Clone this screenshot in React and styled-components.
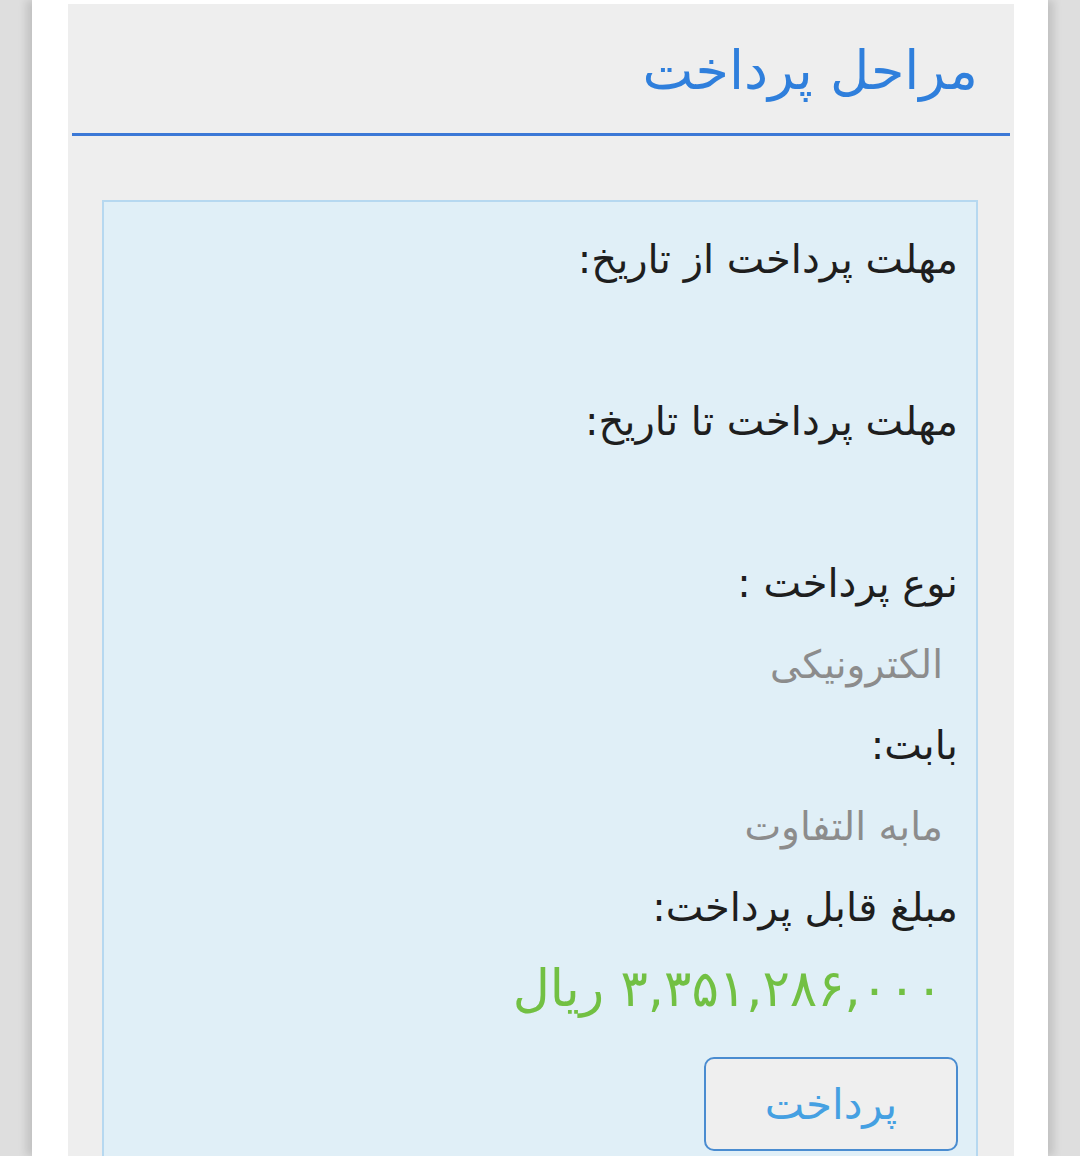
import React from "react";
import styled, { createGlobalStyle } from "styled-components";

const GlobalStyle = createGlobalStyle`
  html, body {
    margin: 0;
    padding: 0;
    background: #dedede;
    font-family: "DejaVu Sans", "Noto Sans", sans-serif;
  }
`;

const Page = styled.div`
  height: 1156px;
  overflow: hidden;
  display: flex;
  justify-content: center;
  background: #dedede;
`;

const Column = styled.div`
  width: 1016px;
  background: #ffffff;
  box-shadow: -6px 0 8px rgba(0, 0, 0, 0.12), 6px 0 8px rgba(0, 0, 0, 0.12);
  padding: 4px 34px 0 36px;
  box-sizing: border-box;
`;

const Panel = styled.div`
  direction: rtl;
  background: #eeeeee;
  height: 100%;
  display: flex;
  flex-direction: column;
`;

const Header = styled.div`
  height: 129px;
  margin: 0 4px 0 4px;
  border-bottom: 3px solid #3b78d6;
  display: flex;
  align-items: center;
  padding-right: 32px;
`;

const Title = styled.h2`
  margin: 4px 0 0 0;
  font-weight: normal;
  font-size: 54px;
  color: #2f7fdc;
`;

const Body = styled.div`
  padding: 64px 36px 0 34px;
  flex: 1;
  display: flex;
`;

const InfoBox = styled.div`
  flex: 1;
  background: #e0eff7;
  border: 2px solid #b6d8f0;
  border-bottom: none;
  padding: 17px 18px 0 18px;
`;

const Line = styled.div`
  height: 81px;
  line-height: 81px;
  font-size: ${(p) => (p.muted ? "39px" : "40px")};
  white-space: nowrap;
  color: ${(p) => (p.muted ? "#8c8c8c" : "#1e1e1e")};
  padding-right: ${(p) => (p.muted ? "15px" : "0")};
`;

const Amount = styled.div`
  height: 81px;
  line-height: 81px;
  font-size: 51px;
  color: #72c043;
  padding-right: 15px;
  white-space: nowrap;
`;

const PayButton = styled.button`
  margin-top: 28px;
  width: 254px;
  height: 94px;
  border: 2.5px solid #4a8cd0;
  border-radius: 10px;
  background: #efefef;
  color: #45a0e2;
  font-family: inherit;
  font-size: 42px;
  cursor: pointer;
`;

const fields = [
  { label: "مهلت پرداخت از تاریخ:", value: "" },
  { label: "مهلت پرداخت تا تاریخ:", value: "" },
  { label: "نوع پرداخت :", value: "الکترونیکی" },
  { label: "بابت:", value: "مابه التفاوت" },
];

export default function App() {
  return (
    <Page>
      <GlobalStyle />
      <Column>
        <Panel>
          <Header>
            <Title>مراحل پرداخت</Title>
          </Header>
          <Body>
            <InfoBox>
              {fields.map((f) => (
                <React.Fragment key={f.label}>
                  <Line>{f.label}</Line>
                  <Line muted>{f.value}</Line>
                </React.Fragment>
              ))}
              <Line>مبلغ قابل پرداخت:</Line>
              <Amount>۳,۳۵۱,۲۸۶,۰۰۰ ریال</Amount>
              <PayButton>پرداخت</PayButton>
            </InfoBox>
          </Body>
        </Panel>
      </Column>
    </Page>
  );
}
